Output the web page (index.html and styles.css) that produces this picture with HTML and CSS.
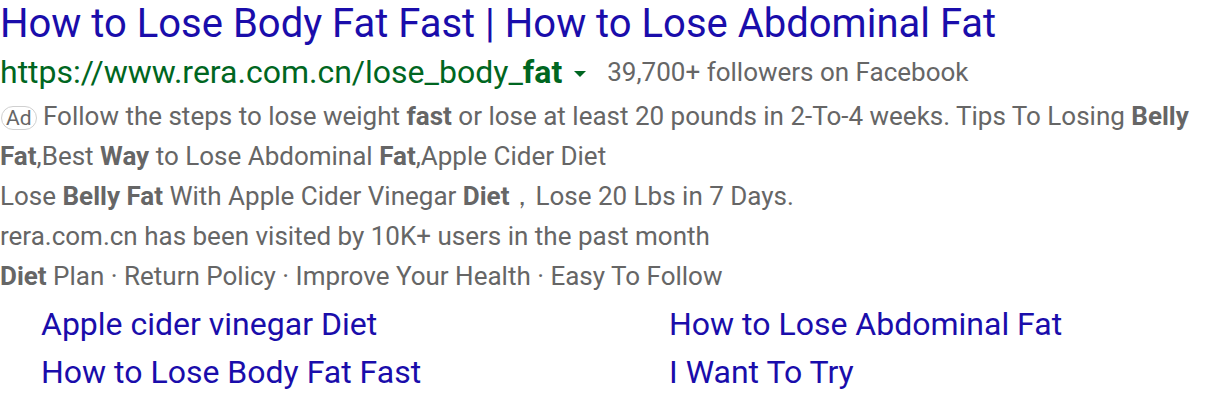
FILE: index.html
```html
<!DOCTYPE html>
<html>
<head>
<meta charset="utf-8">
<link rel="stylesheet" href="styles.css">
</head>
<body>
<div class="result">
  <h3 class="title"><a href="#">How to Lose Body Fat Fast | How to Lose Abdominal Fat</a></h3>
  <div class="urlrow">
    <span class="url">https://www.rera.com.cn/lose_body_<b>fat</b></span>
    <span class="arrow"></span>
    <span class="followers">39,700+ followers on Facebook</span>
  </div>
  <div class="desc">
    <div class="line"><span class="ad">Ad</span> Follow the steps to lose weight <b>fast</b> or lose at least 20 pounds in 2-To-4 weeks. Tips To Losing <b>Belly</b></div>
    <div class="line"><b>Fat</b>,Best <b>Way</b> to Lose Abdominal <b>Fat</b>,Apple Cider Diet</div>
    <div class="line">Lose <b>Belly Fat</b> With Apple Cider Vinegar <b>Diet</b>，Lose 20 Lbs in 7 Days.</div>
    <div class="line">rera.com.cn has been visited by 10K+ users in the past month</div>
    <div class="line"><b>Diet</b> Plan · Return Policy · Improve Your Health · Easy To Follow</div>
  </div>
  <div class="sitelinks">
    <a href="#">Apple cider vinegar Diet</a>
    <a href="#">How to Lose Abdominal Fat</a>
    <a href="#">How to Lose Body Fat Fast</a>
    <a href="#">I Want To Try</a>
  </div>
</div>
</body>
</html>
```

FILE: styles.css
```css
html, body {
  margin: 0;
  padding: 0;
  background: #fff;
}
body {
  font-family: Roboto, "Liberation Sans", Arial, sans-serif;
}
.result {
  width: 1216px;
}
.title {
  margin: 0;
  font-weight: normal;
  font-size: 40px;
  line-height: 48px;
  height: 48px;
  white-space: nowrap;
}
.title a {
  color: #1a0dab;
  text-decoration: none;
}
.urlrow {
  display: flex;
  align-items: center;
  height: 48px;
  white-space: nowrap;
}
.url {
  color: #006621;
  font-size: 32px;
  line-height: 40px;
}
.url b {
  font-weight: bold;
}
.arrow {
  width: 0;
  height: 0;
  border-left: 6px solid transparent;
  border-right: 6px solid transparent;
  border-top: 6px solid #006621;
  margin-left: 12px;
  margin-top: 3px;
}
.followers {
  color: #666;
  font-size: 26px;
  margin-left: 21px;
}
.desc {
  color: #666;
  font-size: 26px;
}
.desc b {
  color: #666;
}
.line {
  height: 40px;
  line-height: 40px;
  white-space: nowrap;
}
.ad {
  display: inline-block;
  box-sizing: border-box;
  height: 24px;
  border: 1px solid #d0d0d0;
  border-radius: 12px;
  font-size: 21px;
  line-height: 22px;
  padding: 0 4px;
  margin-left: 1px;
  vertical-align: 0;
  color: #666;
}
.sitelinks {
  display: grid;
  grid-template-columns: 628px 1fr;
  padding-left: 41px;
  padding-top: 4px;
}
.sitelinks a {
  color: #1a0dab;
  text-decoration: none;
  font-size: 32px;
  line-height: 48px;
  white-space: nowrap;
}
```
